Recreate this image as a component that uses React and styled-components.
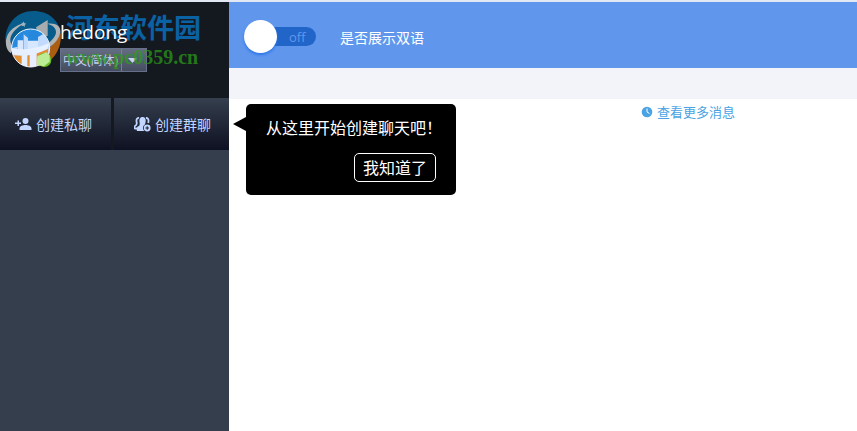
import React from "react";
import styled, { createGlobalStyle } from "styled-components";

const GlobalStyle = createGlobalStyle`
  *, *::before, *::after { box-sizing: border-box; }
  body {
    margin: 0;
    background: #fff;
    font-family: "Noto Sans", "Noto Sans CJK SC", sans-serif;
    font-size: 14px;
  }
  button, select, input { font: inherit; margin: 0; }
`;

const Page = styled.div`
  display: grid;
  grid-template-columns: 229px 1fr;
  min-height: 100vh;
  border-top: 2px solid #e1e8f4;
`;

const Sidebar = styled.aside`
  display: flex;
  flex-direction: column;
  background: #353e4d;
`;

const Profile = styled.header`
  position: relative;
  display: flex;
  height: 96px;
  padding: 18px 0 0 60px;
  background: #14181f;
`;

const Identity = styled.div`
  display: flex;
  flex-direction: column;
  align-items: flex-start;
  gap: 4px;
`;

const UserName = styled.h1`
  position: relative;
  z-index: 1;
  margin: 0;
  font-family: "Open Sans", sans-serif;
  font-size: 19px;
  font-weight: 400;
  line-height: 24px;
  color: #fff;
`;

const LanguageField = styled.label`
  position: relative;
  display: block;
  width: 87px;
  height: 24px;
`;

const LanguageSelect = styled.select`
  appearance: none;
  width: 100%;
  height: 100%;
  padding: 0 2px;
  border: 1px solid #67708a;
  border-radius: 0;
  background: linear-gradient(#656d82, #454d61);
  color: #c3d0f0;
  font-size: 12px;
`;

const SelectArrow = styled.span`
  position: absolute;
  top: 1px;
  right: 1px;
  bottom: 1px;
  display: flex;
  align-items: center;
  width: 25px;
  padding-left: 6px;
  border-left: 1px solid #78819a;
  pointer-events: none;
`;

const LogoMark = styled.svg`
  position: absolute;
  top: 4px;
  left: 2px;
`;

const Watermark = styled.div`
  position: absolute;
  top: 10px;
  left: 66px;
  font-family: "Liberation Serif", "Noto Sans CJK SC", serif;
  font-weight: 700;
  white-space: nowrap;
  pointer-events: none;
`;

const WatermarkTitle = styled.div`
  font-size: 27px;
  line-height: 34px;
  color: #0876c8;
  opacity: 0.78;
`;

const WatermarkSite = styled.div`
  font-size: 20px;
  line-height: 22px;
  color: #2b9c18;
  opacity: 0.72;
`;

const ChatActions = styled.nav`
  position: relative;
  display: grid;
  grid-template-columns: 111px 1fr;
  gap: 3px;
  height: 52px;
  background: #14181f;
`;

const ActionButton = styled.button`
  display: flex;
  align-items: center;
  justify-content: flex-start;
  gap: 4px;
  padding: 0 0 0 ${({ $inset }) => $inset}px;
  border: 0;
  background: linear-gradient(#353f4e, #0e1121);
  color: #c3d6ff;
  font-size: 14px;
  cursor: pointer;
`;

const Tip = styled.div`
  position: absolute;
  z-index: 2;
  top: 6px;
  left: 246px;
  display: flex;
  flex-direction: column;
  width: 210px;
  padding: 12px 20px 13px;
  border-radius: 5px;
  background: #000;
  color: #fff;
  font-size: 16px;

  &::before {
    content: "";
    position: absolute;
    top: 13px;
    left: -13px;
    border: solid transparent;
    border-width: 7px 13px 7px 0;
    border-right-color: #000;
  }
`;

const TipText = styled.p`
  margin: 0 0 13px;
  line-height: 24px;
  white-space: nowrap;
`;

const TipButton = styled.button`
  align-self: flex-end;
  height: 29px;
  padding: 0 8px;
  border: 1px solid #fff;
  border-radius: 5px;
  background: #000;
  color: #fff;
  line-height: 24px;
  cursor: pointer;
`;

const Main = styled.main`
  display: flex;
  flex-direction: column;
  min-width: 0;
`;

const Toolbar = styled.header`
  display: flex;
  align-items: center;
  height: 66px;
  padding: 3px 15px 0;
  background: #6097ed;
`;

const SwitchLabel = styled.label`
  display: flex;
  align-items: center;
  gap: 24px;
  color: #fff;
  cursor: pointer;
`;

const SwitchInput = styled.input`
  position: absolute;
  opacity: 0;
`;

const SwitchTrack = styled.span`
  display: flex;
  align-items: center;
  width: 72px;
  height: 19px;
  border-radius: 10px;
  background: #2265c8;
  color: #6097ed;
  font-family: "Open Sans", sans-serif;
  font-size: 13px;
  gap: 12px;
`;

const SwitchKnob = styled.span`
  flex: none;
  width: 33px;
  height: 33px;
  border-radius: 50%;
  background: #fff;
  box-shadow: 0 2px 3px #2f75e8;
`;

const SubBar = styled.div`
  height: 31px;
  background: #f3f4f9;
`;

const Messages = styled.section`
  display: flex;
  justify-content: center;
  padding: 3px 0 0 290px;
`;

const HistoryLink = styled.a`
  display: flex;
  align-items: center;
  gap: 4px;
  color: #4ba3e3;
  font-size: 13px;
  line-height: 20px;
  text-decoration: none;
`;

function SiteLogo() {
  return (
    <LogoMark width="66" height="70" viewBox="0 0 198 210" aria-hidden="true">
      <defs>
        <clipPath id="logo-disc">
          <circle cx="86" cy="126" r="57" />
        </clipPath>
      </defs>
      <path d="M10 105C8 55 45 15 94 15C140 15 170 42 176 82L92 150L20 130Z" fill="#075c8b" />
      <path d="M176 80C181 125 156 168 112 181L84 160C122 148 155 120 176 80Z" fill="#ab5d10" />
      <path d="M26 142C10 128 8 105 17 86C27 67 48 54 72 50C46 62 28 79 25 98C24 109 28 118 36 124Z" fill="#b1b4b6" />
      <path d="M102 64L137 42V89L112 100Z" fill="#a9acaf" />
      <path d="M136 53C161 50 177 60 175 79C172 101 151 121 124 137L128 119C149 105 162 91 162 78C162 66 153 58 136 53Z" fill="#b1b4b6" />
      <path d="M65 46L67 52L73 53L68 57L69 63L64 59L58 61L61 55L57 50L63 51Z" fill="#9fb7c5" />
      <g clipPath="url(#logo-disc)">
        <circle cx="86" cy="126" r="57" fill="#c2dafe" />
        <path d="M30 115C32 86 57 67 85 67C103 67 116 74 125 83L103 96V111H78V96L63 83L47 93V122L30 126Z" fill="#278ce0" />
        <path d="M36 99L65 78V132H47V116H36ZM80 81L108 67V112H80Z" fill="#2688dc" />
        <path d="M47 103H64V132H47ZM77 104H108V132H77Z" fill="#d6e7ff" />
        <path d="M28 125C54 134 91 132 142 111L136 129C98 148 59 154 32 144Z" fill="#e7f1ff" />
        <path d="M34 148C72 153 105 145 139 128C138 162 112 187 83 184C60 182 42 168 34 148Z" fill="#e29031" />
        <path d="M59 135H76V187H59ZM83 131H104V187H83Z" fill="#e5efff" />
      </g>
      <circle cx="86" cy="126" r="57" fill="none" stroke="#eef5ff" strokeWidth="3" />
      <circle cx="127" cy="162" r="21" fill="#69bd24" />
      <path d="M106 151L133 139L143 148V167L126 181L104 177Z" fill="#bdec97" />
    </LogoMark>
  );
}

function AddPersonIcon() {
  return (
    <svg width="17" height="12" viewBox="0 0 17 12" fill="currentColor" aria-hidden="true">
      <circle cx="10.500" cy="3" r="3" />
      <path d="M4.500 12V10.500C4.500 8 8 7 10.500 7S16.500 8 16.500 10.500V12ZM2.500 2.500H4V4.500H6V6H4V8H2.500V6H0V4.500H2.500Z" />
    </svg>
  );
}

function AddGroupIcon() {
  return (
    <svg width="17" height="15" viewBox="0 0 17 15" fill="none" aria-hidden="true">
      <path d="M5 1C2.800 .7 2 3 2.700 5.500C3 7 2.800 8 1 9C0 9.500 .3 11.500 1 11.500H3M12 1C14.200 .7 15 3 14.200 6" stroke="currentColor" strokeWidth="1.800" />
      <path d="M8.500 0C5.800 0 5 2.500 5.600 5.500C6 8 5.500 8.800 3.800 9.500C2.600 10.200 2.500 13 3 14H11V9.500C10.600 8.500 11.300 6.500 11.700 4.500C12 2 11 0 8.500 0Z" fill="currentColor" />
      <circle cx="13.200" cy="11" r="4.200" fill="#1b2030" />
      <circle cx="13.200" cy="11" r="3.400" fill="currentColor" />
      <path d="M13.200 9.200V12.800M11.400 11H15" stroke="#1b2030" />
    </svg>
  );
}

function ClockIcon() {
  return (
    <svg width="12" height="12" viewBox="0 0 12 12" aria-hidden="true">
      <circle cx="6" cy="6" r="5.300" fill="#4ba3e3" />
      <path d="M6 2.500V6L8.500 7.500" fill="none" stroke="#fff" />
    </svg>
  );
}

export default function App() {
  return (
    <>
      <GlobalStyle />
      <Page>
        <Sidebar>
          <Profile>
            <SiteLogo />
            <Identity>
              <UserName>hedong</UserName>
              <LanguageField>
                <LanguageSelect aria-label="语言" defaultValue="zh">
                  <option value="zh">中文(简体)</option>
                </LanguageSelect>
                <SelectArrow>
                  <svg width="9" height="5" viewBox="0 0 9 5" aria-hidden="true">
                    <path d="M0 0H9L4.500 5Z" fill="#c5d4f5" />
                  </svg>
                </SelectArrow>
              </LanguageField>
            </Identity>
            <Watermark>
              <WatermarkTitle>河东软件园</WatermarkTitle>
              <WatermarkSite>www.pc0359.cn</WatermarkSite>
            </Watermark>
          </Profile>
          <ChatActions>
            <ActionButton type="button" $inset={15}>
              <AddPersonIcon />
              创建私聊
            </ActionButton>
            <ActionButton type="button" $inset={20}>
              <AddGroupIcon />
              创建群聊
            </ActionButton>
            <Tip role="status">
              <TipText>从这里开始创建聊天吧！</TipText>
              <TipButton type="button">我知道了</TipButton>
            </Tip>
          </ChatActions>
        </Sidebar>
        <Main>
          <Toolbar>
            <SwitchLabel>
              <SwitchInput type="checkbox" role="switch" />
              <SwitchTrack>
                <SwitchKnob />
                off
              </SwitchTrack>
              是否展示双语
            </SwitchLabel>
          </Toolbar>
          <SubBar />
          <Messages>
            <HistoryLink href="#history">
              <ClockIcon />
              查看更多消息
            </HistoryLink>
          </Messages>
        </Main>
      </Page>
    </>
  );
}
